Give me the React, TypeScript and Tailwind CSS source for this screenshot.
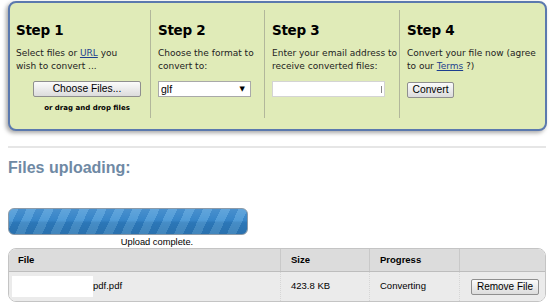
import React from 'react';

const verdana = "font-['DejaVu_Sans',Verdana,sans-serif]";
const arial = "font-['Liberation_Sans',Arial,sans-serif]";

const btn =
  'h-[16px] rounded-[2px] border border-[#8f8f8f] bg-[linear-gradient(#fbfbfb,#dcdcdc)] text-[10.3px] leading-none text-black ' +
  arial;

const StepColumn: React.FC<{ title: string; width: string; first?: boolean; children: React.ReactNode }> = ({
  title,
  width,
  first,
  children,
}) => (
  <div className={`${width} h-[108px] ${first ? 'pl-[6px]' : 'border-l border-[#b2b79b] pl-[7px]'} pt-[12px]`}>
    <h3 className={`${verdana} text-[13.5px] leading-[16px] font-bold tracking-[-0.3px] text-black`}>{title}</h3>
    <div className={`${verdana} mt-[9px] whitespace-nowrap text-[9px] leading-[13px] text-[#222]`}>{children}</div>
  </div>
);

export default function App() {
  return (
    <div className={`w-[550px] h-[305px] overflow-hidden bg-white ${arial}`}>
      {/* Steps panel */}
      <div className="ml-[8px] mt-[1px] w-[539px] h-[130px] rounded-[8px] border-2 border-[#5b79ae] bg-[#e0ebb8] shadow-[-2px_2px_4px_rgba(0,0,0,0.35)]">
        <div className="flex pt-[7px]">
          <StepColumn title="Step 1" width="w-[140px]" first>
            <p>
              Select files or <a className="text-[#1d3f8f] underline">URL</a> you
              <br />
              wish to convert ...
            </p>
            <div className="mt-[8px] flex flex-col items-center pr-[2px]">
              <button className={`${btn} w-[108px] ml-[10px]`}>Choose Files...</button>
              <span className={`${verdana} mt-[7px] ml-[10px] text-[7px] leading-[9px] font-bold text-black`}>
                or drag and drop files
              </span>
            </div>
          </StepColumn>

          <StepColumn title="Step 2" width="w-[114px]">
            <p>
              Choose the format to
              <br />
              convert to:
            </p>
            <div className="mt-[8px] flex h-[16px] w-[93px] items-center justify-between border border-[#a9a9a9] bg-white pl-[2px] pr-[5px]">
              <span className={`${arial} text-[10.5px] leading-none text-black`}>glf</span>
              <span className="text-[7px] leading-none text-black">▼</span>
            </div>
          </StepColumn>

          <StepColumn title="Step 3" width="w-[135px]">
            <p>
              Enter your email address to
              <br />
              receive converted files:
            </p>
            <div className="mt-[8px] flex h-[16px] w-[113px] items-center justify-end border border-[#d4d4d4] bg-white pr-[2px]">
              <span className="h-[7px] w-[1px] bg-[#888]" />
            </div>
          </StepColumn>

          <StepColumn title="Step 4" width="w-[146px]">
            <p>
              Convert your file now (agree
              <br />
              to our <a className="text-[#1d3f8f] underline">Terms</a> ?)
            </p>
            <button className={`${btn} mt-[9px] w-[47px]`}>Convert</button>
          </StepColumn>
        </div>
      </div>

      <div className="ml-[8px] mt-[15px] h-[2px] w-[538px] bg-[#e6e6e6]" />

      <h2 className="ml-[8px] mt-[10px] text-[16px] leading-[20px] font-bold text-[#6f89a4]">Files uploading:</h2>

      {/* Progress bar */}
      <div className="ml-[8px] mt-[30px] h-[27px] w-[240px] overflow-hidden rounded-[6px] border border-[#8c9aa8] bg-[linear-gradient(rgba(255,255,255,0.12),rgba(255,255,255,0.04)_45%,rgba(0,0,0,0.08)_55%,rgba(0,0,0,0.12)),repeating-linear-gradient(115deg,#4b98d6_0px,#4b98d6_8.5px,#2f80c6_8.5px,#2f80c6_16px)]" />
      <div className="ml-[8px] mt-[2px] w-[298px] text-center text-[9.3px] leading-[11px] text-black">Upload complete.</div>

      {/* Files table */}
      <div className="ml-[8px] w-[538px] overflow-hidden rounded-[8px] border border-[#c4c4c4] text-[9.5px] text-black">
        <div className="flex h-[23px] items-center border-b border-[#bdbdbd] bg-[#dcdcdc] font-bold">
          <div className="w-[271px] pl-[9px]">File</div>
          <div className="flex h-full w-[89px] items-center border-l border-[#c9c9c9] pl-[10px]">Size</div>
          <div className="flex h-full w-[90px] items-center border-l border-[#c9c9c9] pl-[10px]">Progress</div>
          <div className="h-full flex-1 border-l border-[#c9c9c9]" />
        </div>
        <div className="flex h-[29px] items-center bg-[#ebebeb]">
          <div className="flex w-[271px] items-center pl-[3px]">
            <span className="h-[21px] w-[81px] bg-white" />
            <span>pdf.pdf</span>
          </div>
          <div className="flex h-full w-[89px] items-center border-l border-dotted border-[#d6d6d6] pl-[10px]">423.8 KB</div>
          <div className="flex h-full w-[90px] items-center border-l border-dotted border-[#d6d6d6] pl-[10px]">Converting</div>
          <div className="flex h-full flex-1 items-center border-l border-dotted border-[#d6d6d6] pl-[11px]">
            <button className={`${btn} w-[68px] text-[10px]`}>Remove File</button>
          </div>
        </div>
      </div>
    </div>
  );
}
